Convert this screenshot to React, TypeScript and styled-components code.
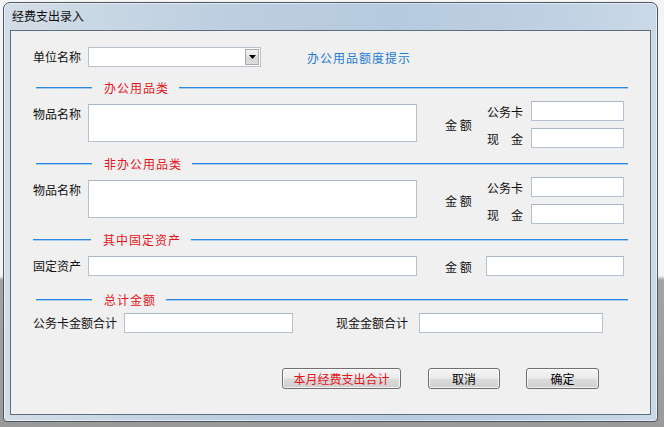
import React from 'react';
import styled, { createGlobalStyle } from 'styled-components';

const GlobalStyle = createGlobalStyle`
  html, body {
    margin: 0;
    padding: 0;
  }
  body {
    font-family: "Noto Sans CJK SC", "Liberation Sans", sans-serif;
    font-size: 12px;
  }
`;

export default function App() {
  return (
    <>
      <GlobalStyle />
      <Desktop>
        <Window>
          <TitleBar>经费支出录入</TitleBar>
          <Client>
            <Row>
              <Label $w={55}>单位名称</Label>
              <Select>
                <SelectButton>
                  <svg width="7" height="4" viewBox="0 0 7 4">
                    <path d="M0 0h7L3.5 4z" fill="#000" />
                  </svg>
                </SelectButton>
              </Select>
              <HintLink>办公用品额度提示</HintLink>
            </Row>

            <SectionHeader $top={13}>
              <Rule $w={56} />
              <SectionTitle>办公用品类</SectionTitle>
              <Rule />
            </SectionHeader>
            <ItemRow $top={6}>
              <Label $w={55} $top={6}>物品名称</Label>
              <TextArea />
              <AmountCaption>金 额</AmountCaption>
              <PayColumn>
                <PayRow>
                  <PayLabel>公务卡</PayLabel>
                  <TextBox $w={93} $left={8} />
                </PayRow>
                <PayRow>
                  <PayLabel>现金</PayLabel>
                  <TextBox $w={93} $left={8} />
                </PayRow>
              </PayColumn>
            </ItemRow>

            <SectionHeader $top={8}>
              <Rule $w={56} />
              <SectionTitle>非办公用品类</SectionTitle>
              <Rule />
            </SectionHeader>
            <ItemRow $top={6}>
              <Label $w={55} $top={6}>物品名称</Label>
              <TextArea />
              <AmountCaption>金 额</AmountCaption>
              <PayColumn>
                <PayRow>
                  <PayLabel>公务卡</PayLabel>
                  <TextBox $w={93} $left={8} />
                </PayRow>
                <PayRow>
                  <PayLabel>现金</PayLabel>
                  <TextBox $w={93} $left={8} />
                </PayRow>
              </PayColumn>
            </ItemRow>

            <SectionHeader $top={8}>
              <Rule $w={58} $shift={-3} />
              <SectionTitle>其中固定资产</SectionTitle>
              <Rule />
            </SectionHeader>
            <Row $top={9}>
              <Label $w={55}>固定资产</Label>
              <TextBox $w={329} />
              <AmountCaption>金 额</AmountCaption>
              <TextBox $w={138} $left={13} />
            </Row>

            <SectionHeader $top={16}>
              <Rule $w={56} />
              <SectionTitle>总计金额</SectionTitle>
              <Rule />
            </SectionHeader>
            <Row $top={6}>
              <Label $w={91}>公务卡金额合计</Label>
              <TextBox $w={169} />
              <Label $w={83} $left={43}>现金金额合计</Label>
              <TextBox $w={184} />
            </Row>

            <ButtonBar>
              <PushButton $w={119} $accent>本月经费支出合计</PushButton>
              <PushButton $w={72}>取消</PushButton>
              <PushButton $w={73}>确定</PushButton>
            </ButtonBar>
          </Client>
        </Window>
      </Desktop>
    </>
  );
}

const Desktop = styled.div`
  width: 664px;
  height: 427px;
  overflow: hidden;
  padding: 2px 0 0 3px;
  box-sizing: border-box;
  background: linear-gradient(to bottom, #f4f4f4 0, #f4f4f4 276px, #a3a3a3 280px, #9a9a9a 100%);
`;

const Window = styled.div`
  width: 655px;
  height: 420px;
  box-sizing: border-box;
  display: flex;
  flex-direction: column;
  border: 1px solid #4a5662;
  border-radius: 7px 7px 4px 4px;
  padding: 0 6px 6px 6px;
  background: linear-gradient(to right, #d3dde7 0%, #bccee0 35%, #b6cadf 60%, #bfd1e3 85%, #cbd9e7 100%);
  box-shadow: inset 0 0 0 1px rgba(255, 255, 255, 0.55);
`;

const TitleBar = styled.div`
  height: 27px;
  flex: none;
  display: flex;
  align-items: center;
  padding-left: 2px;
  padding-bottom: 2px;
  box-sizing: border-box;
  font-size: 12px;
  color: #111;
`;

const Client = styled.div`
  flex: 1;
  border: 1px solid #5f6e7e;
  background: #f0f0f0;
  padding: 16px 24px 0 22px;
  display: flex;
  flex-direction: column;
`;

const Row = styled.div<{ $top?: number }>`
  display: flex;
  align-items: center;
  height: 20px;
  margin-top: ${p => p.$top ?? 0}px;
`;

const Label = styled.span<{ $w?: number; $top?: number; $left?: number }>`
  flex: none;
  width: ${p => (p.$w ? `${p.$w}px` : 'auto')};
  margin-left: ${p => p.$left ?? 0}px;
  line-height: 14px;
  color: #111;
  white-space: nowrap;
  ${p => (p.$top !== undefined ? `align-self: flex-start; margin-top: ${p.$top}px;` : '')}
`;

const TextBox = styled.input<{ $w: number; $left?: number }>`
  flex: none;
  width: ${p => p.$w}px;
  height: 20px;
  margin: 0 0 0 ${p => p.$left ?? 0}px;
  box-sizing: border-box;
  border: 1px solid #b5c1ce;
  border-top-color: #abb7c4;
  background: #fff;
  padding: 0 3px;
  font: inherit;
  outline: none;
`;

const TextArea = styled.textarea`
  flex: none;
  align-self: flex-start;
  width: 329px;
  height: 38px;
  margin: 3px 0 0 0;
  box-sizing: border-box;
  border: 1px solid #b5c1ce;
  border-top-color: #abb7c4;
  background: #fff;
  resize: none;
  font: inherit;
  outline: none;
`;

const Select = styled.div`
  flex: none;
  width: 173px;
  height: 20px;
  box-sizing: border-box;
  border: 1px solid #b9c3cd;
  background: #fff;
  display: flex;
  justify-content: flex-end;
  padding: 1px;
`;

const SelectButton = styled.div`
  width: 14px;
  box-sizing: border-box;
  border: 1px solid #a9a9a9;
  background: linear-gradient(to bottom, #f3f3f3, #e4e4e4 50%, #d6d6d6 51%, #dcdcdc);
  display: flex;
  align-items: center;
  justify-content: center;
`;

const HintLink = styled.span`
  margin-left: 46px;
  color: #1f7bd3;
  letter-spacing: 1px;
  white-space: nowrap;
`;

const SectionHeader = styled.div<{ $top: number }>`
  display: flex;
  align-items: center;
  height: 15px;
  margin: ${p => p.$top}px -2px 0 3px;
`;

const Rule = styled.div<{ $w?: number; $shift?: number }>`
  height: 1px;
  background: #2a88e0;
  box-shadow: 0 1px 0 rgba(80, 160, 230, 0.45);
  margin-left: ${p => p.$shift ?? 0}px;
  ${p => (p.$w ? `width: ${p.$w}px; flex: none;` : 'flex: 1;')}
`;

const SectionTitle = styled.span`
  margin: 0 10px 0 12px;
  color: #e3151b;
  letter-spacing: 1px;
  line-height: 15px;
  white-space: nowrap;
`;

const ItemRow = styled.div<{ $top: number }>`
  display: flex;
  align-items: center;
  height: 47px;
  margin-top: ${p => p.$top}px;
`;

const AmountCaption = styled.span`
  flex: none;
  width: 28px;
  margin-left: 28px;
  white-space: nowrap;
  color: #111;
`;

const PayColumn = styled.div`
  display: flex;
  flex-direction: column;
  gap: 7px;
  margin-left: 14px;
`;

const PayRow = styled.div`
  display: flex;
  align-items: center;
  height: 20px;
`;

const PayLabel = styled.span`
  flex: none;
  width: 36px;
  text-align: justify;
  text-align-last: justify;
  color: #111;
`;

const ButtonBar = styled.div`
  display: flex;
  margin: 35px 0 0 249px;
  gap: 26px;
`;

const PushButton = styled.button<{ $w: number; $accent?: boolean }>`
  width: ${p => p.$w}px;
  height: 21px;
  padding: 0;
  box-sizing: border-box;
  border: 1px solid #707070;
  border-radius: 3px;
  background: linear-gradient(to bottom, #f4f4f4 0%, #ebebeb 48%, #dcdcdc 52%, #cfcfcf 100%);
  box-shadow: inset 0 0 0 1px rgba(255, 255, 255, 0.7);
  font: inherit;
  color: ${p => (p.$accent ? '#e3151b' : '#000')};
  &:first-child {
    margin-right: 1px;
  }
`;
